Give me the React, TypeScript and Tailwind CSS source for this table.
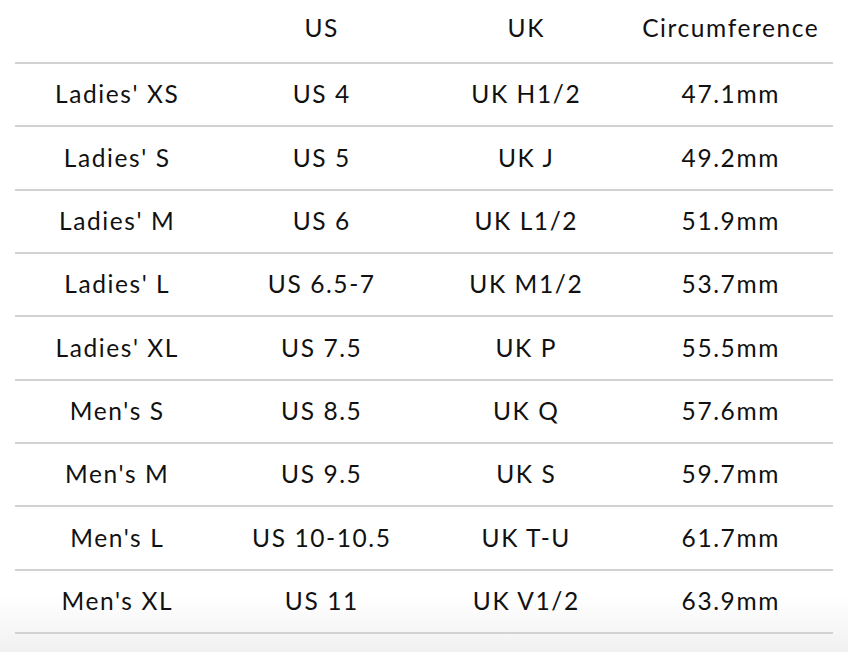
const rows = [
  ["Ladies' XS", "US 4", "UK H1/2", "47.1mm"],
  ["Ladies' S", "US 5", "UK J", "49.2mm"],
  ["Ladies' M", "US 6", "UK L1/2", "51.9mm"],
  ["Ladies' L", "US 6.5-7", "UK M1/2", "53.7mm"],
  ["Ladies' XL", "US 7.5", "UK P", "55.5mm"],
  ["Men's S", "US 8.5", "UK Q", "57.6mm"],
  ["Men's M", "US 9.5", "UK S", "59.7mm"],
  ["Men's L", "US 10-10.5", "UK T-U", "61.7mm"],
  ["Men's XL", "US 11", "UK V1/2", "63.9mm"],
];

export default function App() {
  return (
    <div className="h-[652px] w-[848px] bg-[linear-gradient(to_bottom,#ffffff_595px,#f1f1f1_652px)] font-['Lato','Liberation_Sans',sans-serif] text-[#111]">
      <div className="ml-[15px] w-[818px]">
        {/* header */}
        <div className="grid h-[64px] grid-cols-4 items-center border-b-2 border-[#d2d2d2] pb-[5px] text-[24.5px] tracking-[0.065em]">
          <div></div>
          <div className="text-center">US</div>
          <div className="text-center">UK</div>
          <div className="text-center">Circumference</div>
        </div>
        {rows.map((r) => (
          <div
            key={r[0]}
            className="grid h-[63.33px] grid-cols-4 items-center border-b-2 border-[#d2d2d2] text-[24.5px] tracking-[0.065em]"
          >
            {r.map((c, i) => (
              <div key={i} className="text-center">
                {c}
              </div>
            ))}
          </div>
        ))}
      </div>
    </div>
  );
}
